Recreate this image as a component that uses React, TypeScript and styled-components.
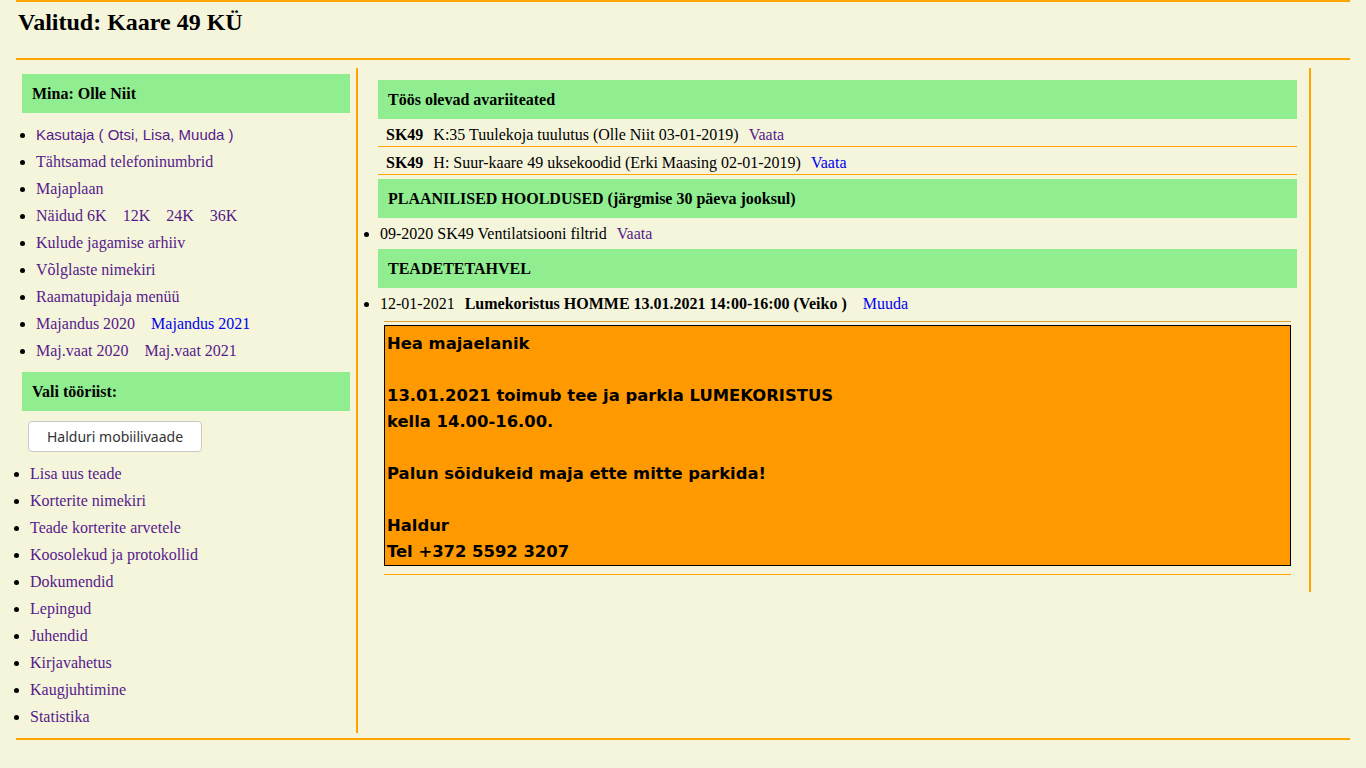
import React from 'react';
import styled, { createGlobalStyle } from 'styled-components';

const GlobalStyle = createGlobalStyle`
  html, body {
    margin: 0;
    padding: 0;
    background: #f5f5dc;
  }
  body {
    font-family: "Liberation Serif", "Times New Roman", serif;
    font-size: 16px;
    color: #000;
  }
`;

const ORANGE = '#ffa500';

const Page = styled.div`
  width: 1334px;
  padding: 0 7px 0 16px;
`;

const Header = styled.header`
  border-top: 2px solid ${ORANGE};
  border-bottom: 2px solid ${ORANGE};
  padding: 6px 2px 22px;
`;

const Title = styled.h2`
  margin: 0;
  font-size: 24px;
  line-height: 28px;
  font-weight: bold;
`;

const Columns = styled.div`
  display: flex;
  align-items: flex-start;
  margin-top: 8px;
`;

const LeftCol = styled.aside`
  width: 328px;
  padding: 6px 6px 3px;
  border-right: 2px solid ${ORANGE};
`;

const RightCol = styled.main`
  width: 919px;
  padding: 12px 12px 17px 20px;
  border-right: 2px solid ${ORANGE};
`;

const GreenHead = styled.div<{ $gap?: number }>`
  background: #90ee90;
  padding: 10px;
  font-weight: bold;
  line-height: 19px;
  margin-top: ${p => p.$gap ?? 0}px;
`;

const Menu = styled.ul<{ $indent: number; $top: number; $bottom: number }>`
  margin: ${p => p.$top}px 0 ${p => p.$bottom}px;
  padding-left: ${p => p.$indent}px;
`;

const MenuItem = styled.li`
  line-height: 19px;
  padding: 4px 0;
`;

const Link = styled.a<{ $fresh?: boolean; $sans?: boolean }>`
  color: ${p => (p.$fresh ? '#0000ee' : '#551a8b')};
  text-decoration: none;
  cursor: pointer;
  font-family: ${p =>
    p.$sans ? '"Liberation Sans", Arial, sans-serif' : 'inherit'};
  font-size: ${p => (p.$sans ? '15px' : 'inherit')};

  & + & {
    margin-left: 16px;
  }
`;

const ToolButton = styled.button`
  display: block;
  margin: 10px 0 0 6px;
  width: 174px;
  height: 31px;
  background: #fff;
  border: 1px solid #c8c8c8;
  border-radius: 4px;
  font-family: "Noto Sans", "Open Sans", sans-serif;
  font-size: 14px;
  color: #333;
  padding: 0;
`;

const AlarmRow = styled.div`
  display: flex;
  gap: 10px;
  padding: 6px 8px 1px;
  line-height: 20px;
  border-bottom: 1px solid ${ORANGE};
`;

const Code = styled.b``;

const Bullets = styled.ul<{ $top: number; $bottom: number }>`
  margin: ${p => p.$top}px 0 ${p => p.$bottom}px;
  padding-left: 2px;
`;

const BulletItem = styled.li`
  line-height: 20px;
`;

const Spaced = styled.span<{ $left: number }>`
  margin-left: ${p => p.$left}px;
`;

const Rule = styled.div<{ $color: string; $top: number }>`
  margin: ${p => p.$top}px 6px 0;
  border-top: 1px solid ${p => p.$color};
`;

const Notice = styled.div`
  margin: 3px 6px 0;
  background: #ff9900;
  border: 1px solid #000;
  padding: 5px 2px 0;
  font-family: "DejaVu Sans", "Comic Sans MS", sans-serif;
  font-weight: bold;
  font-size: 16.4px;
  line-height: 26px;
  white-space: pre-line;
`;

const Footer = styled.footer`
  margin-top: 5px;
  border-top: 2px solid ${ORANGE};
  height: 40px;
`;

const noticeText = `Hea majaelanik

13.01.2021 toimub tee ja parkla LUMEKORISTUS
kella 14.00-16.00.

Palun sõidukeid maja ette mitte parkida!

Haldur
Tel +372 5592 3207`;

const tools = [
  'Lisa uus teade',
  'Korterite nimekiri',
  'Teade korterite arvetele',
  'Koosolekud ja protokollid',
  'Dokumendid',
  'Lepingud',
  'Juhendid',
  'Kirjavahetus',
  'Kaugjuhtimine',
  'Statistika',
];

export default function App() {
  return (
    <Page>
      <GlobalStyle />
      <Header>
        <Title>Valitud: Kaare 49 KÜ</Title>
      </Header>
      <Columns>
        <LeftCol>
          <GreenHead>Mina: Olle Niit</GreenHead>
          <Menu $indent={14} $top={8} $bottom={8}>
            <MenuItem>
              <Link $sans>Kasutaja ( Otsi, Lisa, Muuda )</Link>
            </MenuItem>
            <MenuItem>
              <Link>Tähtsamad telefoninumbrid</Link>
            </MenuItem>
            <MenuItem>
              <Link>Majaplaan</Link>
            </MenuItem>
            <MenuItem>
              <Link>Näidud 6K</Link>
              <Link>12K</Link>
              <Link>24K</Link>
              <Link>36K</Link>
            </MenuItem>
            <MenuItem>
              <Link>Kulude jagamise arhiiv</Link>
            </MenuItem>
            <MenuItem>
              <Link>Võlglaste nimekiri</Link>
            </MenuItem>
            <MenuItem>
              <Link>Raamatupidaja menüü</Link>
            </MenuItem>
            <MenuItem>
              <Link>Majandus 2020</Link>
              <Link $fresh>Majandus 2021</Link>
            </MenuItem>
            <MenuItem>
              <Link>Maj.vaat 2020</Link>
              <Link>Maj.vaat 2021</Link>
            </MenuItem>
          </Menu>
          <GreenHead>Vali tööriist:</GreenHead>
          <ToolButton>Halduri mobiilivaade</ToolButton>
          <Menu $indent={8} $top={8} $bottom={0}>
            {tools.map(t => (
              <MenuItem key={t}>
                <Link>{t}</Link>
              </MenuItem>
            ))}
          </Menu>
        </LeftCol>

        <RightCol>
          <GreenHead>Töös olevad avariiteated</GreenHead>
          <AlarmRow>
            <Code>SK49</Code>
            <span>K:35 Tuulekoja tuulutus (Olle Niit 03-01-2019)</span>
            <Link>Vaata</Link>
          </AlarmRow>
          <AlarmRow>
            <Code>SK49</Code>
            <span>H: Suur-kaare 49 uksekoodid (Erki Maasing 02-01-2019)</span>
            <Link $fresh>Vaata</Link>
          </AlarmRow>

          <GreenHead $gap={4}>
            PLAANILISED HOOLDUSED (järgmise 30 päeva jooksul)
          </GreenHead>
          <Bullets $top={6} $bottom={5}>
            <BulletItem>
              09-2020 SK49 Ventilatsiooni filtrid
              <Spaced $left={10}>
                <Link>Vaata</Link>
              </Spaced>
            </BulletItem>
          </Bullets>

          <GreenHead>TEADETETAHVEL</GreenHead>
          <Bullets $top={6} $bottom={0}>
            <BulletItem>
              12-01-2021
              <Spaced $left={10}>
                <b>Lumekoristus HOMME 13.01.2021 14:00-16:00 (Veiko )</b>
              </Spaced>
              <Spaced $left={16}>
                <Link $fresh>Muuda</Link>
              </Spaced>
            </BulletItem>
          </Bullets>
          <Rule $color="#e0a030" $top={7} />
          <Notice>{noticeText}</Notice>
          <Rule $color={ORANGE} $top={8} />
        </RightCol>
      </Columns>
      <Footer />
    </Page>
  );
}
